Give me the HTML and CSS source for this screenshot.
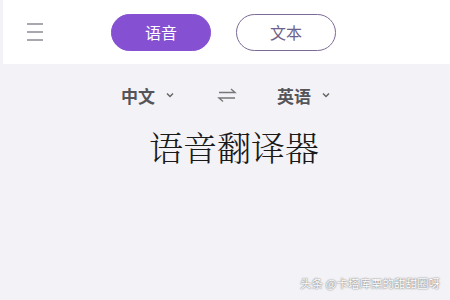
FILE: index.html
```html
<!DOCTYPE html>
<html lang="zh">
<head>
<meta charset="utf-8">
<link rel="stylesheet" href="styles.css">
</head>
<body>
<div class="page">
  <header class="header">
    <div class="menu">
      <span></span><span></span><span></span>
    </div>
    <div class="tabs">
      <button class="tab active">语音</button>
      <button class="tab">文本</button>
    </div>
  </header>
  <div class="langs">
    <div class="lang">中文
      <svg class="chev" width="8" height="6" viewBox="0 0 8 6"><path d="M1 1.5 L4 4.5 L7 1.5" fill="none" stroke="#666" stroke-width="1.5"/></svg>
    </div>
    <svg class="swap" width="20" height="16" viewBox="0 0 20 16"><path d="M2 5.5 H18 L14 2 M18 11 H2 L6 14.5" fill="none" stroke="#777" stroke-width="1.4"/></svg>
    <div class="lang">英语
      <svg class="chev" width="8" height="6" viewBox="0 0 8 6"><path d="M1 1.5 L4 4.5 L7 1.5" fill="none" stroke="#666" stroke-width="1.5"/></svg>
    </div>
  </div>
  <h1 class="title">语音翻译器</h1>
  <div class="watermark">头条 @卡塔库栗的甜甜圈呀</div>
</div>
</body>
</html>
```
FILE: styles.css
```css
html, body {
  margin: 0;
  padding: 0;
}
body {
  background: #f3f3f7;
  font-family: "Noto Sans CJK SC", "Noto Sans", sans-serif;
  width: 450px;
  height: 300px;
  overflow: hidden;
}
.page {
  position: relative;
  height: 300px;
  padding-left: 3px;
}
.header {
  background: #ffffff;
  height: 64px;
  display: flex;
  align-items: center;
}
.menu {
  display: flex;
  flex-direction: column;
  gap: 6px;
  margin-left: 24px;
  width: 16px;
}
.menu span {
  display: block;
  height: 2px;
  background: #a8a8ae;
}
.tabs {
  display: flex;
  gap: 25px;
  margin-left: 68px;
}
.tab {
  width: 100px;
  height: 37px;
  border-radius: 19px;
  border: 1.5px solid #7b6a98;
  background: #fff;
  color: #6e628a;
  font-family: "Noto Sans CJK SC", sans-serif;
  font-size: 16px;
  padding: 0;
  box-sizing: border-box;
}
.tab.active {
  background: #8650d2;
  border-color: #8650d2;
  color: #ffffff;
}
.langs {
  display: flex;
  align-items: center;
  margin-top: 16px;
  margin-left: 118px;
  height: 30px;
}
.lang {
  display: flex;
  align-items: center;
  font-size: 17px;
  font-weight: bold;
  color: #555559;
}
.chev {
  margin-left: 11px;
}
.swap {
  margin-left: 43px;
  margin-right: 40px;
}
.title {
  margin: 0;
  margin-top: 17px;
  margin-left: 146px;
  font-family: "Noto Serif CJK SC", "Source Han Serif SC", "AR PL UMing CN", "AR PL SungtiL GB", "Noto Sans CJK SC", serif;
  font-weight: 300;
  font-size: 34px;
  line-height: 40px;
  color: #1a1a1a;
}
.watermark {
  position: absolute;
  right: 10px;
  bottom: 9px;
  font-size: 11.5px;
  color: #ffffff;
  text-shadow: 0 0 1px #777, 0 0 2px #888;
}
```
